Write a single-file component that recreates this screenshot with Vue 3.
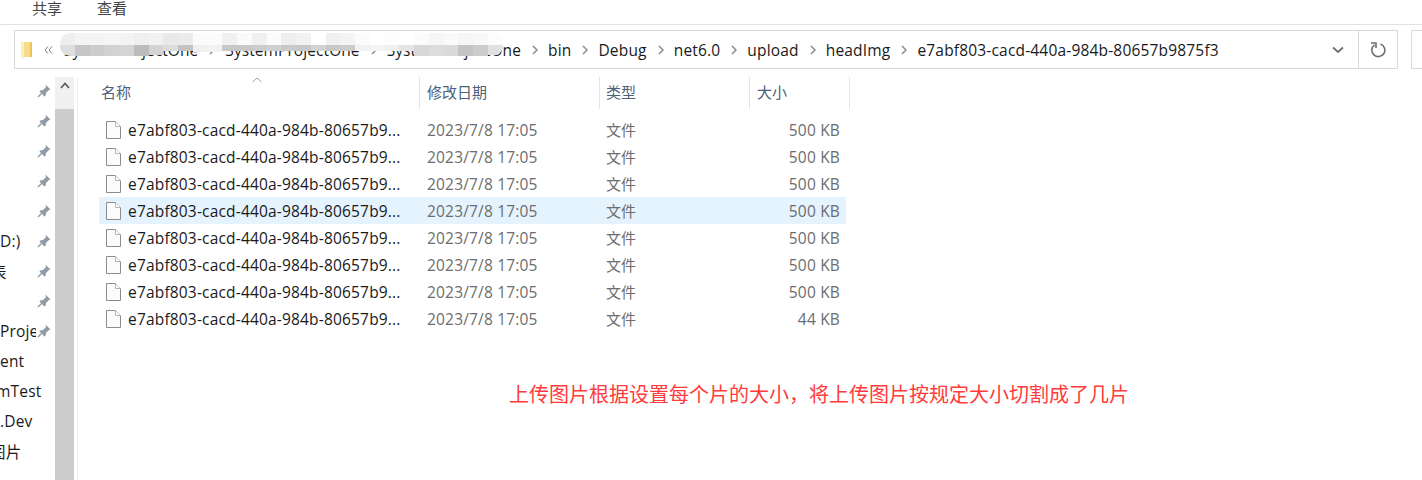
<template>
  <div class="window">
    <div class="ribbon">
      <span class="tab tab--share">共享</span>
      <span class="tab tab--view">查看</span>
    </div>

    <div class="address-row">
      <div class="address">
        <svg class="folder" width="13" height="18" viewBox="0 0 13 18">
          <path d="M1 1h11v15H4l-3 1.500z" fill="#f7dc8c" />
          <path d="M1 1h3v15l-3 1.500z" fill="#fdeeb9" />
          <path d="M10 1h2v15h-2z" fill="#eec458" />
        </svg>
        <svg class="overflow" width="9" height="8" viewBox="0 0 9 8">
          <path d="M4 .5 1 4l3 3.500M8 .5 5 4l3 3.500" fill="none" stroke="#7d7d7d" />
        </svg>
        <div class="crumbs">
          <template v-for="(crumb, i) in crumbs" :key="i">
            <span class="crumb" :class="{ 'crumb--hidden': i < 3 }">{{ crumb }}</span>
            <svg v-if="i < crumbs.length - 1" class="chevron" width="6" height="10" viewBox="0 0 6 10">
              <path d="M1 1l4 4-4 4" fill="none" stroke="#8a8a8a" stroke-width="1.500" />
            </svg>
          </template>
        </div>
        <svg class="dropdown" width="12" height="8" viewBox="0 0 12 8">
          <path d="M1 1.500l5 4.500 5-4.500" fill="none" stroke="#707070" stroke-width="1.800" />
        </svg>
        <div class="refresh">
          <svg width="16" height="16" viewBox="0 0 16 16">
            <path d="M4.600 2.800A6.500 6.500 0 1 0 10.500 2" fill="none" stroke="#707070" stroke-width="1.600" />
            <path d="M1 1.500h5v5" fill="none" stroke="#707070" stroke-width="1.600" transform="translate(0 -.5)" />
          </svg>
        </div>
        <div class="mosaic">
          <div v-for="(col, i) in mosaic" :key="i" class="mosaic__col">
            <div class="mosaic__top" :style="{ background: col[0] }"></div>
            <div :style="{ background: col[1], height: col[2] + 'px' }"></div>
          </div>
        </div>
      </div>
      <div class="search"></div>
    </div>

    <div class="body">
      <aside class="sidebar">
        <div class="nav">
          <div v-for="(item, i) in nav" :key="i" class="nav__row">
            <span class="nav__label" :class="{ 'nav__label--pinned': item.pin }" :style="{ marginLeft: item.shift + 'px' }">{{ item.label }}</span>
            <svg v-if="item.pin" class="pin" width="14" height="14" viewBox="0 0 14 14">
              <path d="M8.500.5l5 5-1.500.5-3 3-.5 3-1 .5-5-5 .5-1 3-.5 3-3z" fill="#8f9ba6" />
              <path d="M4.500 9.500 1 13" stroke="#8f9ba6" stroke-width="1.500" />
            </svg>
          </div>
        </div>
        <div class="scrollbar">
          <div class="scrollbar__up">
            <svg width="10" height="7" viewBox="0 0 10 7">
              <path d="M1 6l4-4.500L9 6" fill="none" stroke="#555" stroke-width="1.600" />
            </svg>
          </div>
          <div class="scrollbar__thumb"></div>
        </div>
      </aside>

      <main class="files">
        <div class="head">
          <div class="head__cell head__cell--name">
            名称
            <svg class="sort" width="10" height="6" viewBox="0 0 10 6">
              <path d="M.5 5 5 1l4.500 4" fill="none" stroke="#a0a0a0" />
            </svg>
          </div>
          <div class="head__cell head__cell--date">修改日期</div>
          <div class="head__cell head__cell--type">类型</div>
          <div class="head__cell head__cell--size">大小</div>
        </div>
        <div class="rows">
          <div v-for="(file, i) in files" :key="i" class="row" :class="{ 'row--active': i === 3 }">
            <svg class="file-icon" width="15" height="18" viewBox="0 0 15 18">
              <path d="M.5.500h9l5 5v12H.5z" fill="#fafbfc" stroke="#8c8c8c" />
              <path d="M9.500.500v5h5" fill="#fff" stroke="#b5b5b5" />
            </svg>
            <span class="row__name">{{ file.name }}</span>
            <span class="row__date">{{ file.date }}</span>
            <span class="row__type">文件</span>
            <span class="row__size">{{ file.size }}</span>
          </div>
        </div>
      </main>
    </div>

    <p class="note">上传图片根据设置每个片的大小，将上传图片按规定大小切割成了几片</p>
  </div>
</template>

<script setup>
const crumbs = [
  'SystemProjectOne',
  'SystemProjectOne',
  'SystemProjectOne',
  'bin',
  'Debug',
  'net6.0',
  'upload',
  'headImg',
  'e7abf803-cacd-440a-984b-80657b9875f3'
]

// pixelated smear over the first part of the path: top colour, bottom colour, bottom height
const mosaic = [
  ['#eeeeee', '#dedede', 11], ['#f4f4f4', '#c6c6c6', 11], ['#f4f4f4', '#cdcdcd', 11],
  ['#f6f6f6', '#d2d2d2', 11], ['#f3f3f3', '#d4d4d4', 11], ['#f0f0f0', '#bcbcbc', 11],
  ['#f2f2f2', '#d4d4d4', 10], ['#e9e9e9', '#dcdcdc', 6], ['#ebebeb', '#c4c4c4', 6],
  ['#fbfbfb', '#f0f0f0', 7], ['#fbfbfb', '#f2f2f2', 7], ['#f0f0f0', '#c8c8c8', 6],
  ['#fafafa', '#c8c8c8', 6], ['#f0f0f0', '#cccccc', 6], ['#fbfbfb', '#cfcfcf', 6],
  ['#eeeeee', '#c9c9c9', 6], ['#f2f2f2', '#c8c8c8', 6], ['#ffffff', '#d2d2d2', 6],
  ['#f0f0f0', '#c8c8c8', 6], ['#f4f4f4', '#cccccc', 6], ['#fbfbfb', '#f2f2f2', 6],
  ['#ffffff', '#f4f4f4', 6], ['#fdfdfd', '#f0f0f0', 6], ['#ffffff', '#e4e4e4', 6],
  ['#fbfbfb', '#d8d8d8', 11], ['#f6f6f6', '#dcdcdc', 11], ['#fafafa', '#dadada', 11],
  ['#f6f6f6', '#c4c4c4', 11], ['#f8f8f8', '#cccccc', 11], ['#fcfcfc', '#e0e0e0', 10]
]

const nav = [
  { label: '', pin: true, shift: 0 },
  { label: '', pin: true, shift: 0 },
  { label: '', pin: true, shift: 0 },
  { label: '', pin: true, shift: 0 },
  { label: '', pin: true, shift: 0 },
  { label: 'D:)', pin: true, shift: 0 },
  { label: '表', pin: true, shift: -9 },
  { label: '', pin: true, shift: 0 },
  { label: 'Proje', pin: true, shift: 0 },
  { label: 'ent', pin: false, shift: 0 },
  { label: 'mTest', pin: false, shift: -4 },
  { label: '.Dev', pin: false, shift: 0 },
  { label: '图片', pin: false, shift: -10 }
]

const files = Array.from({ length: 8 }, (_, i) => ({
  name: 'e7abf803-cacd-440a-984b-80657b9...',
  date: '2023/7/8 17:05',
  size: i === 7 ? '44 KB' : '500 KB'
}))
</script>

<style scoped>
.window {
  position: relative;
  width: 1422px;
  height: 480px;
  overflow: hidden;
  background: #fff;
  font-family: "Open Sans", "Noto Sans CJK SC", sans-serif;
  font-size: 15.5px;
  letter-spacing: .18px;
  color: #1a1a1a;
}

.ribbon {
  display: flex;
  height: 24px;
  padding-left: 32px;
  border-bottom: 1px solid #e1e1e1;
  font-size: 15px;
  letter-spacing: 0;
  line-height: 17px;
  color: #444;
}

.tab--view {
  margin-left: 35px;
}

.address-row {
  display: flex;
  gap: 13px;
  height: 39px;
  padding: 5px 0 0 14px;
}

.address {
  position: relative;
  flex: none;
  display: flex;
  align-items: center;
  width: 1384px;
  border: 1px solid #d9d9d9;
  box-sizing: border-box;
  overflow: hidden;
}

.folder {
  flex: none;
  margin-left: 5px;
}

.overflow {
  flex: none;
  margin-left: 11px;
}

.crumbs {
  display: flex;
  align-items: center;
  flex: 1;
  margin-left: 11px;
  min-width: 0;
  height: 100%;
  white-space: nowrap;
  overflow: hidden;
}

.crumb {
  flex: none;
}

.crumb--hidden {
  letter-spacing: .08px;
}

.chevron {
  flex: none;
  margin: 0 10px 0 11px;
}

.dropdown {
  flex: none;
  margin-right: 14px;
}

.refresh {
  flex: none;
  display: flex;
  align-items: center;
  justify-content: center;
  width: 38px;
  height: 100%;
  border-left: 1px solid #d9d9d9;
}

.mosaic {
  position: absolute;
  top: 2px;
  left: 45px;
  display: flex;
  border-radius: 10px;
  overflow: hidden;
}

.mosaic__col {
  width: 14.75px;
}

.mosaic__top {
  height: 12px;
}

.search {
  flex: none;
  width: 30px;
  border: 1px solid #d9d9d9;
}

.body {
  display: flex;
  height: 412px;
}

.sidebar {
  flex: none;
  display: flex;
  width: 77px;
  border-right: 1px solid #f0f0f0;
  margin-top: 8px;
}

.nav {
  flex: none;
  width: 55px;
  overflow: hidden;
  margin-top: -1px;
}

.nav__row {
  display: flex;
  align-items: center;
  height: 30px;
  position: relative;
  white-space: nowrap;
}

.nav__label {
  flex: none;
}

.nav__label--pinned {
  max-width: 36px;
  overflow: hidden;
}

.pin {
  position: absolute;
  top: 8px;
  left: 37px;
}

.scrollbar {
  flex: none;
  display: flex;
  flex-direction: column;
  width: 19px;
  background: #f0f0f0;
}

.scrollbar__up {
  display: flex;
  justify-content: center;
  height: 32px;
  padding-top: 5px;
  box-sizing: border-box;
}

.scrollbar__thumb {
  flex: 1;
  background: #cdcdcd;
}

.files {
  flex: 1;
  padding: 8px 0 0 20px;
}

.head {
  display: flex;
  height: 32px;
  color: #4c607a;
  font-size: 15px;
  letter-spacing: 0;
}

.head__cell {
  position: relative;
  flex: none;
  padding-left: 7px;
  box-sizing: border-box;
  line-height: 30px;
  border-right: 1px solid #e5e5e5;
}

.head__cell--name {
  width: 322px;
  padding-left: 3px;
}

.head__cell--date {
  width: 180px;
}

.head__cell--type {
  width: 150px;
  padding-left: 6px;
}

.head__cell--size {
  width: 100px;
}

.sort {
  position: absolute;
  top: 0;
  left: 154px;
}

.rows {
  padding-top: 7px;
  padding-left: 1px;
  width: 747px;
}

.row {
  display: flex;
  align-items: center;
  height: 27px;
  white-space: nowrap;
}

.row--active {
  background: #e5f3ff;
}

.file-icon {
  flex: none;
  margin-left: 7px;
}

.row__name {
  flex: none;
  width: 299px;
  margin-left: 7px;
}

.row__date {
  flex: none;
  width: 179px;
  color: #6d6d6d;
}

.row__type {
  flex: none;
  width: 100px;
  color: #6d6d6d;
  font-size: 15px;
  letter-spacing: 0;
  line-height: 20px;
}

.row__size {
  flex: none;
  width: 134px;
  text-align: right;
  color: #6d6d6d;
}

.note {
  position: absolute;
  top: 380px;
  left: 509px;
  margin: 0;
  font-family: "Noto Sans CJK SC", sans-serif;
  font-size: 20px;
  letter-spacing: 0;
  line-height: 28px;
  font-weight: 400;
  color: #ff3b3b;
  white-space: nowrap;
}
</style>
